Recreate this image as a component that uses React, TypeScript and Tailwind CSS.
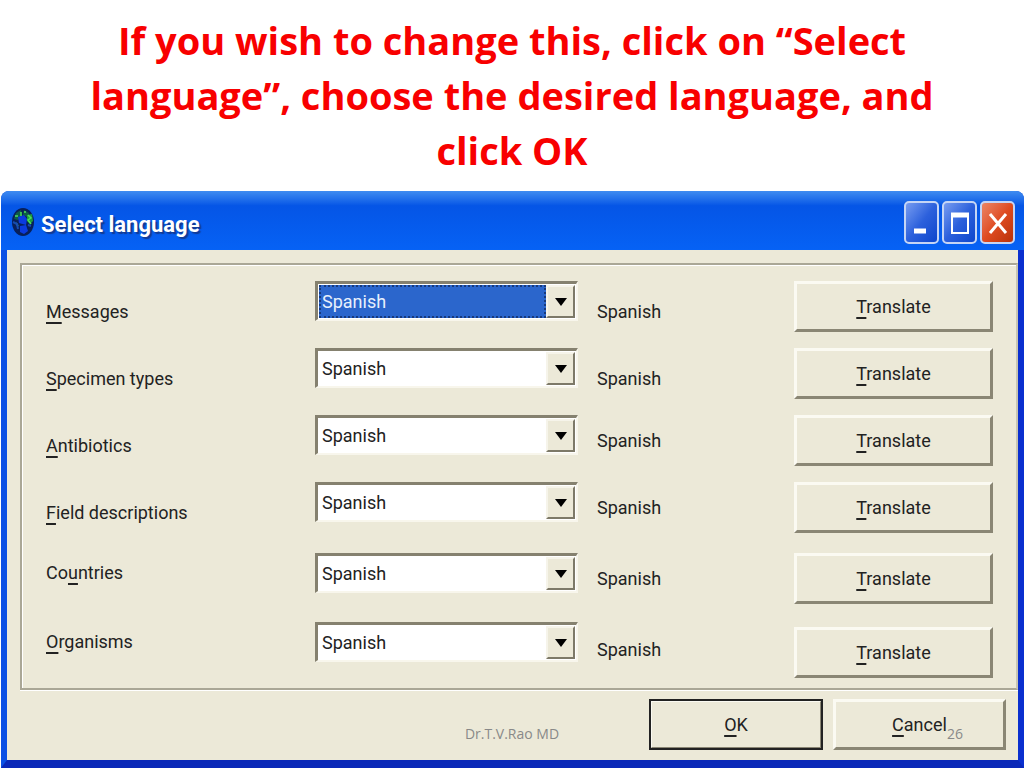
import { useState } from 'react';
import clsx from 'clsx';

interface LanguageRow {
  id: string;
  label: string;
  hotkey: number;
  rowClass: string;
  labelClass: string;
  valueClass: string;
}

const LANGUAGES = ['Spanish', 'English', 'French', 'Portuguese', 'German'];

const ROWS: LanguageRow[] = [
  { id: 'messages', label: 'Messages', hotkey: 0, rowClass: 'h-[51px] mb-4', labelClass: 'self-end', valueClass: 'self-end' },
  { id: 'specimen', label: 'Specimen types', hotkey: 0, rowClass: 'h-[51px] mb-4', labelClass: 'self-end', valueClass: 'self-end' },
  { id: 'antibiotics', label: 'Antibiotics', hotkey: 0, rowClass: 'h-[51px] mb-4', labelClass: 'self-end', valueClass: 'self-center' },
  { id: 'fields', label: 'Field descriptions', hotkey: 0, rowClass: 'h-[51px] mb-5', labelClass: 'self-end', valueClass: 'self-center' },
  { id: 'countries', label: 'Countries', hotkey: 2, rowClass: 'h-[51px] mb-[18px]', labelClass: 'self-start', valueClass: 'self-center' },
  { id: 'organisms', label: 'Organisms', hotkey: 0, rowClass: 'h-14', labelClass: 'self-start', valueClass: 'self-center' },
];

const Mnemonic = ({ text, index = 0 }: { text: string; index?: number }) => (
  <span>
    {text.slice(0, index)}
    <u className="decoration-2 underline-offset-4">{text[index]}</u>
    {text.slice(index + 1)}
  </span>
);

const BevelButton = ({ text, className }: { text: string; className?: string }) => (
  <button
    type="button"
    className={clsx(
      'h-[51px] bg-[#ece9d8] border-[3px] border-t-[#fbfaf2] border-l-[#fbfaf2] border-r-[#8a8674] border-b-[#8a8674] text-center leading-10',
      className
    )}
  >
    <Mnemonic text={text} />
  </button>
);

const GlobeIcon = () => (
  <svg className="w-6 h-8" viewBox="0 0 24 32" aria-hidden="true">
    <ellipse cx="12" cy="17" rx="11" ry="14" fill="#08205a" />
    <path d="M5 8l5-3 1 6-4 4-4-1zM13 5l5 3-2 4-4-2z" fill="#0d5c48" />
    <path d="M7 12l6-2 3 4-1 6-7-2zM9 21l6-1 2 6-4 3-4-2z" fill="#0a3be0" />
    <path d="M16 10l5-1 1 7-3 3-3-3z" fill="#1b9a3c" />
    <path d="M17 10l3 3-3 2 3 4M4 11h3M10 7v4M5 18l2 3M14 6v2" stroke="#4be05a" strokeWidth="1.5" fill="none" />
    <path d="M2 17l4 2 1 5M17 20l3 1" stroke="#164bb0" strokeWidth="2" fill="none" />
  </svg>
);

const CaptionButton = ({ label, children, close }: { label: string; children: React.ReactNode; close?: boolean }) => (
  <button
    type="button"
    aria-label={label}
    className={clsx(
      'w-[35px] h-[43px] rounded-[5px] border-2 border-[#c5d5f5] flex items-center justify-center',
      close
        ? 'bg-linear-to-br from-[#ea8464] via-[#df4b20] to-[#b93208]'
        : 'bg-linear-to-br from-[#779bf0] via-[#2c60dc] to-[#0b45cc]'
    )}
  >
    <svg className="w-7 h-9 shrink-0" viewBox="0 0 28 36" aria-hidden="true">
      {children}
    </svg>
  </button>
);

const TitleBar = () => (
  <header className="h-[59px] pl-[10px] pr-[9px] flex items-center rounded-t-lg bg-linear-to-b from-[#3f8cf0] from-0% via-[#0555e6] via-25% to-[#0662f5]">
    <GlobeIcon />
    <h2 className="flex-1 ml-[6px] mt-2 text-[22px] leading-8 font-bold text-white [text-shadow:2px_2px_1px_#123b94]">
      Select language
    </h2>
    <div className="flex gap-[3px] mt-1">
      <CaptionButton label="Minimize">
        <path d="M6 26h12" stroke="#fff" strokeWidth="5" />
      </CaptionButton>
      <CaptionButton label="Maximize">
        <rect x="6" y="9" width="16" height="19" stroke="#fff" strokeWidth="2" fill="none" />
        <path d="M5 10h18" stroke="#fff" strokeWidth="5" />
      </CaptionButton>
      <CaptionButton label="Close" close>
        <path d="M6 9l16 19M22 9L6 28" stroke="#fff" strokeWidth="3" />
      </CaptionButton>
    </div>
  </header>
);

interface LanguageSelectProps {
  id: string;
  value: string;
  active: boolean;
  onChange: (value: string) => void;
}

const LanguageSelect = ({ id, value, active, onChange }: LanguageSelectProps) => (
  <div className="h-10 self-start flex bg-white border-t-[3px] border-l-[3px] border-r-2 border-b-2 border-t-[#85816f] border-l-[#85816f] border-r-[#f8f6ec] border-b-[#f8f6ec] p-px">
    <select
      id={id}
      value={value}
      onChange={(e) => onChange(e.target.value)}
      className={clsx(
        'flex-1 min-w-0 appearance-none outline-none pl-[3px] leading-7',
        active ? 'bg-[#2b66cc] text-[#e8f0fc] border-2 border-dotted border-[#173a7c] pl-px' : 'bg-white text-[#222]'
      )}
    >
      {LANGUAGES.map((language) => (
        <option key={language}>{language}</option>
      ))}
    </select>
    <span className="w-[29px] flex items-center justify-center pointer-events-none bg-[#ece9d8] border-2 border-t-[#f6f4ea] border-l-[#f6f4ea] border-r-[#7d7968] border-b-[#7d7968]">
      <svg className="w-3 h-2" viewBox="0 0 12 8" aria-hidden="true">
        <path d="M0 0h12L6 8z" fill="#000" />
      </svg>
    </span>
  </div>
);

export default function App() {
  const [selected, setSelected] = useState<Record<string, string>>({});

  return (
    <main className="relative bg-white">
      <h1 className="h-[191px] pt-[13px] px-20 text-center font-bold text-[#f80000] text-[38px] leading-[55px] font-['Open_Sans',sans-serif]">
        If you wish to change this, click on “Select language”, choose the desired language, and click OK
      </h1>

      <section className="ml-px rounded-t-lg bg-[#0a3fd8] text-[18px] text-[#222] font-[Roboto,'Liberation_Sans',sans-serif]">
        <TitleBar />
        <div className="border-x-[6px] border-b-8 border-l-[#0b50e4] border-r-[#0a2fcf] border-b-[#0a28b8] bg-[#ece9d8] pt-[13px] pb-[10px]">
          <div className="ml-[13px] border-2 border-[#aaa796] border-r-[#c8c5b4] shadow-[inset_1px_1px_0_#fff,0_1px_0_#fff] pt-4 pb-[10px] pl-6 pr-[23px]">
            {ROWS.map((row) => {
              const value = selected[row.id] ?? 'Spanish';
              return (
                <div key={row.id} className={clsx('grid grid-cols-[269fr_263fr_19fr_197fr_199fr]', row.rowClass)}>
                  <label htmlFor={row.id} className={clsx('leading-10', row.labelClass)}>
                    <Mnemonic text={row.label} index={row.hotkey} />
                  </label>
                  <LanguageSelect
                    id={row.id}
                    value={value}
                    active={row.id === 'messages'}
                    onChange={(next) => setSelected({ ...selected, [row.id]: next })}
                  />
                  <output htmlFor={row.id} className={clsx('col-start-4 leading-10', row.valueClass)}>
                    {value}
                  </output>
                  <BevelButton text="Translate" className="self-end" />
                </div>
              );
            })}
          </div>
          <div className="flex justify-end gap-[10px] mt-[9px] pr-3">
            <BevelButton text="OK" className="w-[174px] outline-2 -outline-offset-2 outline-[#222]" />
            <BevelButton text="Cancel" className="w-[173px]" />
          </div>
        </div>
      </section>

      <footer className="absolute inset-x-0 bottom-6 text-center text-[14px] leading-5 text-[#898989] font-['Open_Sans',sans-serif] pointer-events-none">
        <span>Dr.T.V.Rao MD</span>
        <span className="absolute right-[61px]">26</span>
      </footer>
    </main>
  );
}
